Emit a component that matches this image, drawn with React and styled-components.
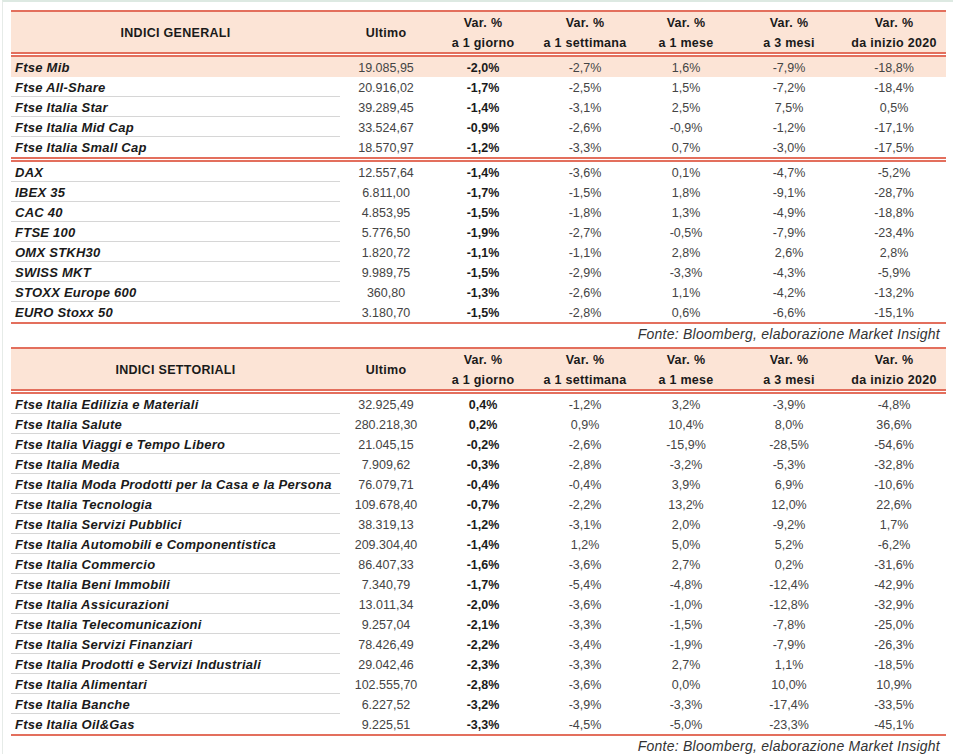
import styled, { createGlobalStyle } from 'styled-components'

const RED = '#e36f5d'
const PEACH = '#fce4d6'
const COLS = '329px 92px 102px 102px 100px 106px 104px'

const GlobalStyle = createGlobalStyle`
  body {
    margin: 0;
    background: #fff;
    font-family: "Liberation Sans", Arial, sans-serif;
    color: #222;
  }
`

const Frame = styled.div`
  width: 951px;
  height: 754px;
  margin-left: 2px;
  border-top: 2px solid #dde9e2;
  border-left: 1px solid #e6ebe8;
  padding: 8px 0 0 8px;
  box-sizing: border-box;
`

const Table = styled.div`
  width: 935px;
  border-top: 2px solid ${RED};
  border-bottom: 2px solid ${RED};
`

const HeaderRow = styled.div`
  display: grid;
  grid-template-columns: ${COLS};
  height: 40px;
  background: ${PEACH};
  background-clip: padding-box;
  border-bottom: 5px double ${RED};
  font-weight: bold;
  font-size: 12.5px;
  letter-spacing: 0.3px;
  color: #1a1a1a;
`

const HeadCell = styled.div`
  display: flex;
  flex-direction: column;
  align-items: center;
  justify-content: center;
  line-height: 20px;
  padding-top: 1px;
  white-space: nowrap;
`

const Row = styled.div`
  display: grid;
  grid-template-columns: ${COLS};
  height: 20px;
  background: ${(p) => (p.$hl ? PEACH : 'transparent')};
  background-clip: padding-box;
  border-bottom: ${(p) => (p.$divider ? `5px double ${RED}` : 'none')};
`

const NameCell = styled.div`
  height: 20px;
  box-sizing: border-box;
  padding: 1px 0 0 4px;
  font-weight: bold;
  font-style: italic;
  font-size: 13px;
  letter-spacing: 0.25px;
  line-height: 20px;
  color: #1a1a1a;
  white-space: nowrap;
  border-bottom: 1px solid ${(p) => (p.$sep ? '#d6d6d6' : 'transparent')};
`

const NumCell = styled.div`
  text-align: center;
  padding-top: 1px;
  font-size: 12.5px;
  line-height: 20px;
  color: ${(p) => (p.$bold ? '#1a1a1a' : '#444')};
  font-weight: ${(p) => (p.$bold ? 'bold' : 'normal')};
  white-space: nowrap;
`

const Source = styled.div`
  width: 935px;
  text-align: right;
  font-style: italic;
  font-size: 14px;
  letter-spacing: 0.25px;
  line-height: 20px;
  color: #333;
  padding-right: 6px;
  box-sizing: border-box;
  margin-bottom: ${(p) => p.$gap || 0}px;
`

const headers = [
  ['Ultimo'],
  ['Var. %', 'a 1 giorno'],
  ['Var. %', 'a 1 settimana'],
  ['Var. %', 'a 1 mese'],
  ['Var. %', 'a 3 mesi'],
  ['Var. %', 'da inizio 2020'],
]

const generali = [
  [
    ['Ftse Mib', '19.085,95', '-2,0%', '-2,7%', '1,6%', '-7,9%', '-18,8%'],
    ['Ftse All-Share', '20.916,02', '-1,7%', '-2,5%', '1,5%', '-7,2%', '-18,4%'],
    ['Ftse Italia Star', '39.289,45', '-1,4%', '-3,1%', '2,5%', '7,5%', '0,5%'],
    ['Ftse Italia Mid Cap', '33.524,67', '-0,9%', '-2,6%', '-0,9%', '-1,2%', '-17,1%'],
    ['Ftse Italia Small Cap', '18.570,97', '-1,2%', '-3,3%', '0,7%', '-3,0%', '-17,5%'],
  ],
  [
    ['DAX', '12.557,64', '-1,4%', '-3,6%', '0,1%', '-4,7%', '-5,2%'],
    ['IBEX 35', '6.811,00', '-1,7%', '-1,5%', '1,8%', '-9,1%', '-28,7%'],
    ['CAC 40', '4.853,95', '-1,5%', '-1,8%', '1,3%', '-4,9%', '-18,8%'],
    ['FTSE 100', '5.776,50', '-1,9%', '-2,7%', '-0,5%', '-7,9%', '-23,4%'],
    ['OMX STKH30', '1.820,72', '-1,1%', '-1,1%', '2,8%', '2,6%', '2,8%'],
    ['SWISS MKT', '9.989,75', '-1,5%', '-2,9%', '-3,3%', '-4,3%', '-5,9%'],
    ['STOXX Europe 600', '360,80', '-1,3%', '-2,6%', '1,1%', '-4,2%', '-13,2%'],
    ['EURO Stoxx 50', '3.180,70', '-1,5%', '-2,8%', '0,6%', '-6,6%', '-15,1%'],
  ],
]

const settoriali = [
  [
    ['Ftse Italia Edilizia e Materiali', '32.925,49', '0,4%', '-1,2%', '3,2%', '-3,9%', '-4,8%'],
    ['Ftse Italia Salute', '280.218,30', '0,2%', '0,9%', '10,4%', '8,0%', '36,6%'],
    ['Ftse Italia Viaggi e Tempo Libero', '21.045,15', '-0,2%', '-2,6%', '-15,9%', '-28,5%', '-54,6%'],
    ['Ftse Italia Media', '7.909,62', '-0,3%', '-2,8%', '-3,2%', '-5,3%', '-32,8%'],
    ['Ftse Italia Moda Prodotti per la Casa e la Persona', '76.079,71', '-0,4%', '-0,4%', '3,9%', '6,9%', '-10,6%'],
    ['Ftse Italia Tecnologia', '109.678,40', '-0,7%', '-2,2%', '13,2%', '12,0%', '22,6%'],
    ['Ftse Italia Servizi Pubblici', '38.319,13', '-1,2%', '-3,1%', '2,0%', '-9,2%', '1,7%'],
    ['Ftse Italia Automobili e Componentistica', '209.304,40', '-1,4%', '1,2%', '5,0%', '5,2%', '-6,2%'],
    ['Ftse Italia Commercio', '86.407,33', '-1,6%', '-3,6%', '2,7%', '0,2%', '-31,6%'],
    ['Ftse Italia Beni Immobili', '7.340,79', '-1,7%', '-5,4%', '-4,8%', '-12,4%', '-42,9%'],
    ['Ftse Italia Assicurazioni', '13.011,34', '-2,0%', '-3,6%', '-1,0%', '-12,8%', '-32,9%'],
    ['Ftse Italia Telecomunicazioni', '9.257,04', '-2,1%', '-3,3%', '-1,5%', '-7,8%', '-25,0%'],
    ['Ftse Italia Servizi Finanziari', '78.426,49', '-2,2%', '-3,4%', '-1,9%', '-7,9%', '-26,3%'],
    ['Ftse Italia Prodotti e Servizi Industriali', '29.042,46', '-2,3%', '-3,3%', '2,7%', '1,1%', '-18,5%'],
    ['Ftse Italia Alimentari', '102.555,70', '-2,8%', '-3,6%', '0,0%', '10,0%', '10,9%'],
    ['Ftse Italia Banche', '6.227,52', '-3,2%', '-3,9%', '-3,3%', '-17,4%', '-33,5%'],
    ['Ftse Italia Oil&Gas', '9.225,51', '-3,3%', '-4,5%', '-5,0%', '-23,3%', '-45,1%'],
  ],
]

function IndexTable({ title, groups, highlightFirst }) {
  return (
    <Table>
      <HeaderRow>
        <HeadCell>{title}</HeadCell>
        {headers.map((h, i) => (
          <HeadCell key={i}>
            {h.map((line) => (
              <span key={line}>{line}</span>
            ))}
          </HeadCell>
        ))}
      </HeaderRow>
      {groups.map((rows, g) =>
        rows.map((r, i) => {
          const hl = highlightFirst && g === 0 && i === 0
          const last = i === rows.length - 1
          return (
            <Row key={r[0]} $hl={hl} $divider={last && g < groups.length - 1}>
              <NameCell $sep={!hl && !last}>{r[0]}</NameCell>
              {r.slice(1).map((v, j) => (
                <NumCell key={j} $bold={j === 1}>
                  {v}
                </NumCell>
              ))}
            </Row>
          )
        })
      )}
    </Table>
  )
}

export default function App() {
  return (
    <>
      <GlobalStyle />
      <Frame>
        <IndexTable title="INDICI GENERALI" groups={generali} highlightFirst />
        <Source $gap={3}>Fonte: Bloomberg, elaborazione Market Insight</Source>
        <IndexTable title="INDICI SETTORIALI" groups={settoriali} />
        <Source>Fonte: Bloomberg, elaborazione Market Insight</Source>
      </Frame>
    </>
  )
}
